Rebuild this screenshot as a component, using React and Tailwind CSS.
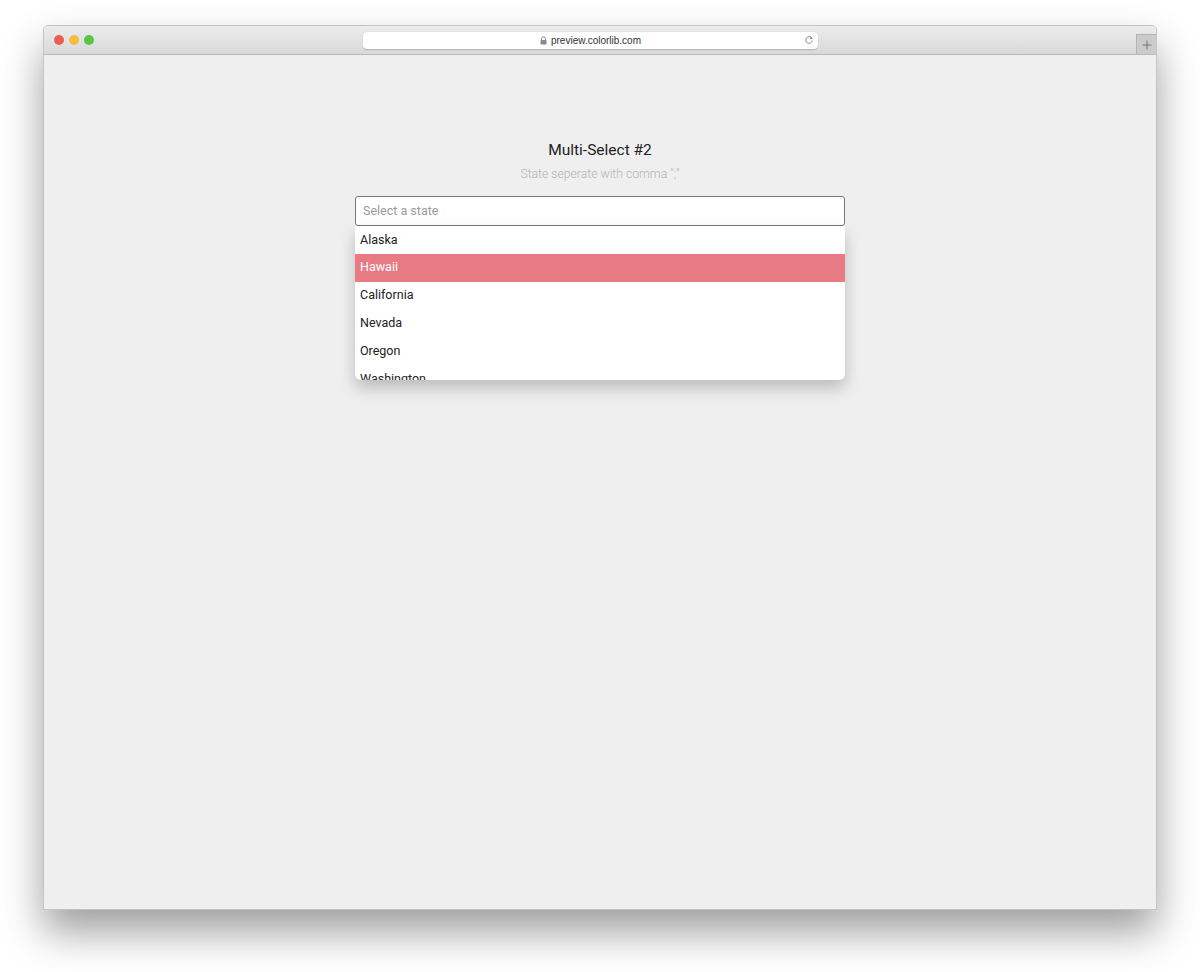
const states = ['Alaska', 'Hawaii', 'California', 'Nevada', 'Oregon', 'Washington'];

function TitleBar() {
  return (
    <div className="relative flex h-[29px] items-center border-b border-[#b9b9b9] bg-gradient-to-b from-[#ececec] to-[#d9d9d9]">
      <div className="flex gap-[5px] pl-[10px]">
        <span className="h-[10px] w-[10px] rounded-full bg-[#ee5d55]" />
        <span className="h-[10px] w-[10px] rounded-full bg-[#f6bd3f]" />
        <span className="h-[10px] w-[10px] rounded-full bg-[#5ac545]" />
      </div>
      <div className="absolute left-[319px] top-[6px] flex h-[17px] w-[455px] items-center justify-center rounded-[4px] bg-white shadow-[0_0.5px_1px_rgba(0,0,0,0.2)]">
        <svg width="7" height="9" viewBox="0 0 7 9" className="mr-[4px]">
          <path d="M1.5 4V2.8a2 2 0 0 1 4 0V4" fill="none" stroke="#8a8a8a" strokeWidth="1" />
          <rect x="0.5" y="4" width="6" height="4.5" rx="0.8" fill="#8a8a8a" />
        </svg>
        <span className="font-['Helvetica','Liberation_Sans',sans-serif] text-[10px] text-[#333]">preview.colorlib.com</span>
        <svg width="10" height="10" viewBox="0 0 10 10" className="absolute right-[4px] top-[3px]">
          <path d="M7.8 3.2A3.3 3.3 0 1 0 8.3 5.4" fill="none" stroke="#7a7a7a" strokeWidth="0.9" />
          <path d="M6.3 1.3L8.2 3.3L5.8 3.9" fill="none" stroke="#7a7a7a" strokeWidth="0.9" />
        </svg>
      </div>
      <div className="absolute right-0 top-[8px] flex h-[20px] w-[20px] items-center justify-center border-l border-t border-[#b3b3b3] bg-[#cbcbcb]">
        <svg width="10" height="10" viewBox="0 0 10 10">
          <path d="M5 0.5V9.5M0.5 5H9.5" stroke="#777" strokeWidth="1" />
        </svg>
      </div>
    </div>
  );
}

export default function App() {
  return (
    <div className="min-h-[972px] w-[1200px] bg-white pt-[25px] font-['Roboto',sans-serif]">
      <div className="mx-[43px] h-[885px] overflow-hidden rounded-t-[5px] border border-[#c4c4c4] bg-[#efefef] shadow-[0_22px_40px_rgba(0,0,0,0.38)]">
        <TitleBar />
        <main className="flex flex-col items-center pt-[85px]">
          <h1 className="text-[15.5px] leading-[20px] text-[#222]">Multi-Select #2</h1>
          <p className="mt-[6px] text-[12.2px] font-light leading-[16px] text-[#b4b4b4]">State seperate with comma ";"</p>
          <div className="mt-[14px] w-[490px]">
            <div className="flex h-[30px] items-center rounded-[3px] border border-[#777] bg-white px-[7px]">
              <span className="text-[12.5px] text-[#9a9a9a]">Select a state</span>
            </div>
            <ul className="h-[154px] overflow-hidden rounded-b-[6px] bg-white shadow-[0_8px_16px_rgba(0,0,0,0.22)]">
              {states.map((s) => (
                <li
                  key={s}
                  className={
                    s === 'Hawaii'
                      ? 'flex h-[27.8px] items-center bg-[#e87a84] px-[5px] text-[12.5px] text-white'
                      : 'flex h-[27.8px] items-center px-[5px] text-[12.5px] text-[#222]'
                  }
                >
                  {s}
                </li>
              ))}
            </ul>
          </div>
        </main>
      </div>
    </div>
  );
}
